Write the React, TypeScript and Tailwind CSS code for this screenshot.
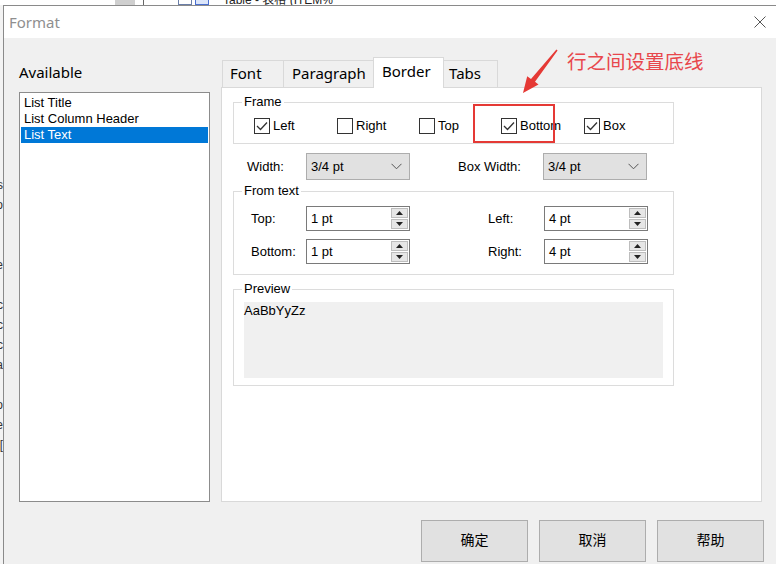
import React from 'react';

const ui = 'font-["Noto_Sans","Noto_Sans_CJK_SC",sans-serif]';
const sys = 'font-["Liberation_Sans","Noto_Sans_CJK_SC",sans-serif]';

const Check: React.FC<{ checked?: boolean }> = ({ checked }) => (
  <span className="w-[16px] h-[16px] border border-[#333] bg-white flex items-center justify-center shrink-0">
    {checked && (
      <svg width="14" height="14" viewBox="0 0 14 14">
        <polyline points="2,7 5.5,10.5 12,3.5" fill="none" stroke="#333" strokeWidth="1.3" />
      </svg>
    )}
  </span>
);

const Chevron = () => (
  <svg width="11" height="7" viewBox="0 0 11 7">
    <polyline points="0.5,0.8 5.5,5.8 10.5,0.8" fill="none" stroke="#555" strokeWidth="1" />
  </svg>
);

const Select: React.FC<{ value: string }> = ({ value }) => (
  <div className="w-[104px] h-[27px] bg-[#e1e1e1] border border-[#adadad] flex items-center justify-between pl-[4px] pr-[7px] text-[13px]">
    <span>{value}</span>
    <Chevron />
  </div>
);

const Spin: React.FC<{ value: string }> = ({ value }) => (
  <div className="w-[104px] h-[25px] bg-white border border-[#7a7a7a] flex text-[13px]">
    <span className="flex-1 pl-[4px] leading-[23px]">{value}</span>
    <div className="w-[19px] flex flex-col gap-px p-px">
      <div className="flex-1 bg-[#e6e6e6] border border-[#bdbdbd] flex items-center justify-center">
        <svg width="7" height="4" viewBox="0 0 7 4"><polygon points="3.5,0 7,4 0,4" fill="#222" /></svg>
      </div>
      <div className="flex-1 bg-[#e6e6e6] border border-[#bdbdbd] flex items-center justify-center">
        <svg width="7" height="4" viewBox="0 0 7 4"><polygon points="0,0 7,0 3.5,4" fill="#222" /></svg>
      </div>
    </div>
  </div>
);

const Group: React.FC<{ label: string; className?: string; children: React.ReactNode }> = ({ label, className, children }) => (
  <fieldset className={`ml-[11px] w-[441px] border border-[#dcdcdc] pl-[8px] ${className ?? ''}`}>
    <legend className="px-[2px] text-[13px] leading-[16px]">{label}</legend>
    {children}
  </fieldset>
);

export default function App() {
  const frame = [
    { name: 'Left', checked: true, w: 'w-[83px]' },
    { name: 'Right', checked: false, w: 'w-[82px]' },
    { name: 'Top', checked: false, w: 'w-[82px]' },
    { name: 'Bottom', checked: true, w: 'w-[83px]' },
    { name: 'Box', checked: true, w: '' },
  ];
  const sideGlyphs = ['s', 'o', '', '', 'e', '', 'ic', 'oc', 'c', 'a', '', 'o', 'e', '['];

  return (
    <div className={`relative w-[776px] h-[564px] overflow-hidden bg-white flex flex-col text-black ${sys}`}>
      {/* window behind the dialog */}
      <div className="h-[5px] shrink-0 bg-white flex overflow-hidden">
        <div className="w-[115px]" />
        <div className="w-[20px] bg-[#cfcfcf]" />
        <div className="w-[8px]" />
        <div className="w-px bg-[#666]" />
        <div className="w-[34px]" />
        <div className="w-[36px] flex gap-[3px] -mt-[4px]">
          <div className="w-[14px] h-[9px] border border-[#6b7fa8]" />
          <div className="w-[14px] h-[9px] border border-[#4a6fd0] bg-[#dbe5fa]" />
        </div>
        <div className="w-[9px]" />
        <span className="text-[12px] leading-[12px] -mt-[6px] whitespace-nowrap text-[#222]">Table - 表格 (ITEM%</span>
      </div>

      <div className="flex flex-1 min-h-0">
        <div className="w-[3px] shrink-0 bg-[#f3f3f3] overflow-hidden">
          <div className="w-[30px] -ml-[27px] pt-[170px] text-right text-[12px] leading-[20px] text-[#333]">
            {sideGlyphs.map((g, i) => (
              <div key={i} className="h-[20px]">{g}</div>
            ))}
          </div>
        </div>

        <div className="flex-1 flex flex-col border-l border-t border-[#8a8a8a]">
          {/* title bar */}
          <div className="h-[32px] shrink-0 bg-white flex items-center justify-between pl-[5px] pr-[10px]">
            <span className={`text-[15px] text-[#8f8f8f] ${ui}`}>Format</span>
            <svg width="12" height="12" viewBox="0 0 12 12">
              <path d="M0.5 0.5 L11.5 11.5 M11.5 0.5 L0.5 11.5" stroke="#555" strokeWidth="1" />
            </svg>
          </div>

          <div className="flex-1 bg-[#f0f0f0] flex flex-col">
            <div className="flex">
              {/* left column */}
              <div className="ml-[15px] w-[191px] shrink-0">
                <div className={`pt-[24px] text-[15px] leading-[20px] ${ui}`}>Available</div>
                <div className="mt-[10px] h-[410px] bg-white border border-[#8c8c8c] pt-[2px] px-px text-[13px] leading-[16px]">
                  <div className="pl-[3px]">List Title</div>
                  <div className="pl-[3px]">List Column Header</div>
                  <div className="pl-[3px] bg-[#0078d7] text-white">List Text</div>
                </div>
              </div>

              {/* right column */}
              <div className="ml-[11px] w-[541px] pt-[18px]">
                <div className={`h-[31px] flex items-end pl-px text-[15px] ${ui}`}>
                  <div className="w-[62px] h-[27px] border border-b-0 border-[#d9d9d9] bg-[#f0f0f0] pl-[7px] leading-[25px]">Font</div>
                  <div className="w-[91px] h-[27px] -ml-px border border-b-0 border-[#d9d9d9] bg-[#f0f0f0] pl-[8px] leading-[25px]">Paragraph</div>
                  <div className="relative z-10 w-[71px] h-[31px] -ml-px -mb-px border border-b-0 border-[#d9d9d9] bg-white pl-[8px] leading-[26px]">Border</div>
                  <div className="w-[55px] h-[27px] -ml-px border border-b-0 border-[#d9d9d9] bg-[#f0f0f0] pl-[5px] leading-[25px]">Tabs</div>
                </div>

                <div className="h-[415px] bg-white border border-[#d9d9d9] text-[13px]">
                  <Group label="Frame" className="mt-[6px] pt-[7px] pb-[8px]">
                    <div className="ml-[12px] h-[18px] flex items-center">
                      {frame.map((f) => (
                        <div key={f.name} className={`flex items-center gap-[3px] ${f.w}`}>
                          <Check checked={f.checked} />
                          <span>{f.name}</span>
                        </div>
                      ))}
                    </div>
                  </Group>

                  <div className="mt-[9px] ml-[25px] flex items-center">
                    <span className="w-[59px]">Width:</span>
                    <Select value="3/4 pt" />
                    <span className="ml-[48px] w-[85px]">Box Width:</span>
                    <Select value="3/4 pt" />
                  </div>

                  <Group label="From text" className="mt-[3px] pt-[7px] pb-[10px]">
                    <div className="ml-[9px] flex flex-col gap-[8px]">
                      {[
                        ['Top:', '1 pt', 'Left:', '4 pt'],
                        ['Bottom:', '1 pt', 'Right:', '4 pt'],
                      ].map((r) => (
                        <div key={r[0]} className="flex items-center">
                          <span className="w-[55px]">{r[0]}</span>
                          <Spin value={r[1]} />
                          <span className="ml-[78px] w-[56px]">{r[2]}</span>
                          <Spin value={r[3]} />
                        </div>
                      ))}
                    </div>
                  </Group>

                  <Group label="Preview" className="mt-[6px] pt-[5px] pb-[7px]">
                    <div className="ml-[2px] w-[419px] h-[76px] bg-[#f0f0f0] pt-[1px] leading-[16px]">AaBbYyZz</div>
                  </Group>
                </div>
              </div>
            </div>

            {/* buttons */}
            <div className={`mt-[18px] flex justify-end gap-[11px] pr-[12px] text-[14px] ${ui}`}>
              {['确定', '取消', '帮助'].map((b) => (
                <div key={b} className="w-[107px] h-[42px] bg-[#e1e1e1] border border-[#adadad] flex items-center justify-center pb-[3px]">
                  {b}
                </div>
              ))}
            </div>
          </div>
        </div>
      </div>

      {/* annotation drawn over the dialog */}
      <div className="absolute left-[473px] top-[104px] w-[82px] h-[39px] border-2 border-[#e53935]" />
      <span className={`absolute left-[567px] top-[49px] text-[19.5px] leading-[26px] text-[#e8474c] ${ui}`}>行之间设置底线</span>
      <svg className="absolute left-[515px] top-[46px]" width="48" height="52" viewBox="0 0 48 52">
        <polygon points="8,47 23.5,38.5 20,35.8 42.6,4.4 41.4,3.6 16,33 12.2,30.2" fill="#e53935" />
      </svg>
    </div>
  );
}
